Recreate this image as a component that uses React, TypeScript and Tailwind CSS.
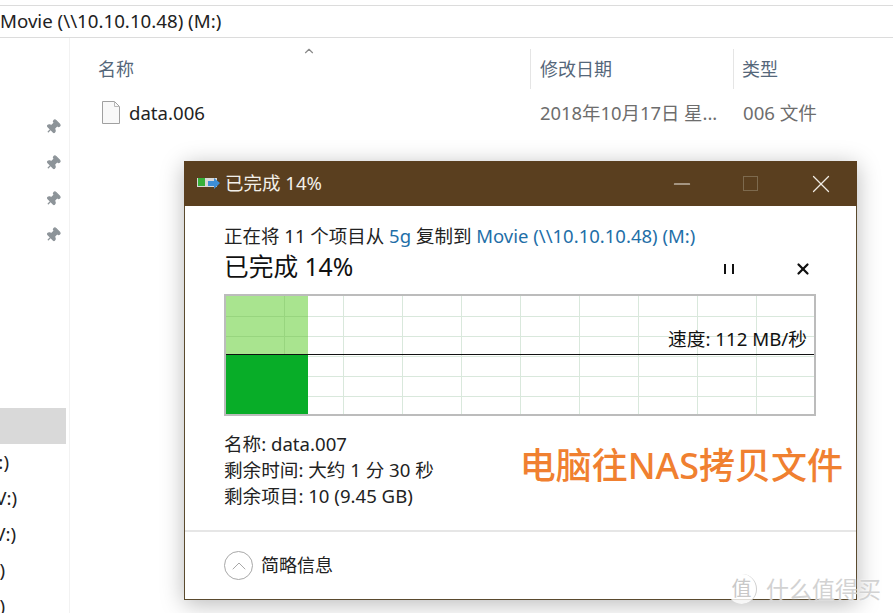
import { FC } from "react";
import { Pin, X, Minus, ChevronUp } from "lucide-react";

const font = "font-['Noto_Sans','Noto_Sans_CJK_SC',sans-serif]";

const Gridlines: FC = () => {
  const cols = [58, 117, 176, 235, 294, 353, 412, 471, 530];
  const rows = [20, 40, 60, 80, 100];
  return (
    <svg width="588" height="118" className="block">
      {cols.map((x) => (
        <line key={x} x1={x + 0.5} y1="0" x2={x + 0.5} y2="118" stroke="#d9e8dc" />
      ))}
      {rows.map((y) => (
        <line key={y} x1="0" y1={y + 0.5} x2="588" y2={y + 0.5} stroke="#d9e8dc" />
      ))}
      <rect x="0" y="0" width="82" height="59" fill="#a9e48f" />
      <line x1="58.5" y1="0" x2="58.5" y2="59" stroke="#98d57f" />
      <line x1="0" y1="20.5" x2="82" y2="20.5" stroke="#98d57f" />
      <line x1="0" y1="40.5" x2="82" y2="40.5" stroke="#98d57f" />
      <rect x="0" y="59" width="82" height="59" fill="#08ad28" />
      <line x1="0" y1="58.5" x2="588" y2="58.5" stroke="#111" />
    </svg>
  );
};

const FileIcon: FC = () => (
  <svg width="18" height="23" viewBox="0 0 18 23">
    <path d="M.5.5h12l5 5v17H.5z" fill="#f8f8f8" stroke="#a0a0a0" />
    <path d="M12.5.5v5h5" fill="none" stroke="#b8b8b8" />
  </svg>
);

const CopyIcon: FC = () => (
  <svg width="23" height="17" viewBox="0 0 23 17">
    <rect x="0" y="3" width="20" height="9" fill="#d8d8d8" />
    <rect x="1" y="3" width="7" height="8" fill="#36b03a" />
    <path d="M11 6h6V3l6 5-6 6v-3h-6z" fill="#3d8ed6" />
  </svg>
);

const drives = [
  { label: "(E:)", width: "w-[9px]" },
  { label: "(V:)", width: "w-[17px]" },
  { label: "(V:)", width: "w-[16px]" },
  { label: "(Z:)", width: "w-[5px]" },
  { label: "(Y:)", width: "w-[5px]" },
];

const App: FC = () => {
  return (
    <div className={`relative w-[893px] h-[613px] overflow-hidden bg-white text-[#1a1a1a] ${font}`}>
      <div className="mt-[5px] h-[33px] border-y border-[#dcdcdc] flex items-center text-[18.7px] text-[#222]">
        Movie (\\10.10.10.48) (M:)
      </div>

      <div className="flex h-[575px]">
        <div className="w-[70px] shrink-0 border-r border-[#f2f2f2] flex flex-col">
          <div className="h-[81px] shrink-0" />
          <div className="flex flex-col items-end pr-[8px] gap-[20px] text-[#8d9499]">
            <Pin size={16} className="rotate-45 fill-[#8d9499]" />
            <Pin size={16} className="rotate-45 fill-[#8d9499]" />
            <Pin size={16} className="rotate-45 fill-[#8d9499]" />
            <Pin size={16} className="rotate-45 fill-[#8d9499]" />
          </div>
          <div className="mt-[165px] w-[66px] h-[36px] shrink-0 bg-[#d9d9d9]" />
          <div className="flex flex-col text-[18.7px] text-[#222]">
            {drives.map((d, i) => (
              <div key={i} className={`h-9 ${d.width} overflow-hidden flex justify-end items-center`}>
                <span className="shrink-0">{d.label}</span>
              </div>
            ))}
          </div>
        </div>

        <div className="flex-1 min-w-0">
          <div className="flex h-[40px] mt-[11px] text-[18px] text-[#55677a]">
            <div className="relative w-[460px] pl-[28px] flex items-center">
              名称
              <ChevronUp size={14} className="absolute left-[232px] -top-[5px] text-[#8a8a8a]" />
            </div>
            <div className="w-[203px] pl-[9px] flex items-center border-l border-[#e5e5e5]">修改日期</div>
            <div className="pl-[8px] flex items-center border-l border-[#e5e5e5]">类型</div>
          </div>
          <div className="flex items-center h-[30px] mt-[9px] text-[18.6px]">
            <div className="w-[460px] pl-[32px] flex items-center gap-[9px] text-[#222]">
              <FileIcon />
              data.006
            </div>
            <div className="w-[203px] pl-[10px] text-[18.4px] text-[#6d6d6d]">2018年10月17日 星...</div>
            <div className="pl-[10px] text-[#6d6d6d]">006 文件</div>
          </div>
        </div>
      </div>

      {/* progress window */}
      <div className="absolute left-[184px] top-[161px] w-[673px] h-[439px] bg-white flex flex-col border border-[#5a4a2e] border-t-0 shadow-[0_4px_22px_rgba(0,0,0,0.28)]">
        <div className="h-[45px] shrink-0 -mx-px bg-[#5a3f1f] flex items-center text-white pl-[13px]">
          <CopyIcon />
          <span className="ml-[5px] -mt-[2px] text-[18.5px] text-[#f2efe9]">已完成 14%</span>
          <div className="ml-auto flex items-center text-[#f0ece4]">
            <Minus size={26} strokeWidth={1} className="mr-[48px]" />
            <div className="w-[15px] h-[15px] border border-[#7d6a4e] mr-[48px]" />
            <X size={30} strokeWidth={1} className="mr-[21px]" />
          </div>
        </div>

        <div className="flex-1 pl-[39px] pr-[39px] pt-[18px] flex flex-col">
          <div className="text-[18.5px] leading-[24px] text-[#222] whitespace-nowrap">
            正在将 11 个项目从 <span className="text-[#1f6fa8]">5g</span> 复制到{" "}
            <span className="text-[#1f6fa8]">Movie (\\10.10.10.48) (M:)</span>
          </div>

          <div className="flex items-center h-[36px] mt-[1px]">
            <span className="text-[24.7px] text-[#111]">已完成 14%</span>
            <div className="ml-auto flex items-center mt-[4px]">
              <div className="flex gap-[6px] mr-[60px]">
                <div className="w-[2px] h-[10px] bg-[#111]" />
                <div className="w-[2px] h-[10px] bg-[#111]" />
              </div>
              <X size={18} strokeWidth={3} className="mr-[5px] text-[#111]" />
            </div>
          </div>

          <div className="relative mt-[9px] w-[592px] h-[122px] border-2 border-[#bcbcbc]">
            <Gridlines />
            <span className="absolute right-[7px] top-[31px] text-[18.7px] leading-[24px] text-[#111] whitespace-nowrap">
              速度: 112 MB/秒
            </span>
          </div>

          <div className="flex justify-between mt-[15px]">
            <div className="text-[18.6px] leading-[26px] text-[#222] whitespace-nowrap">
              <div>名称: data.007</div>
              <div>剩余时间: 大约 1 分 30 秒</div>
              <div>剩余项目: 10 (9.45 GB)</div>
            </div>
            <div className="text-[36px] leading-[40px] mt-[15px] mr-[-26px] font-medium text-[#f08030] whitespace-nowrap">
              电脑往NAS拷贝文件
            </div>
          </div>
        </div>

        <div className="h-[69px] shrink-0 border-t-2 border-[#e6e6e6] pl-[39px] flex items-center gap-[8px]">
          <div className="w-[29px] h-[29px] rounded-full border border-[#a8a8a8] flex items-center justify-center text-[#a8a8a8]">
            <ChevronUp size={24} strokeWidth={1} />
          </div>
          <span className="text-[18px] text-[#222]">简略信息</span>
        </div>
      </div>

      {/* site mark in the corner */}
      <div className="absolute left-[727px] top-[574px] flex items-center gap-[9px] text-[#d2d2d2] [text-shadow:0_0_2px_rgba(255,255,255,0.9)]">
        <div className="w-[30px] h-[30px] rounded-full bg-white/80 border-r border-[#cfcfcf] flex items-center justify-center text-[20px] text-[#c8c8c8]">
          值
        </div>
        <span className="text-[23px] leading-[28px] whitespace-nowrap">什么值得买</span>
      </div>
    </div>
  );
};

export default App;
